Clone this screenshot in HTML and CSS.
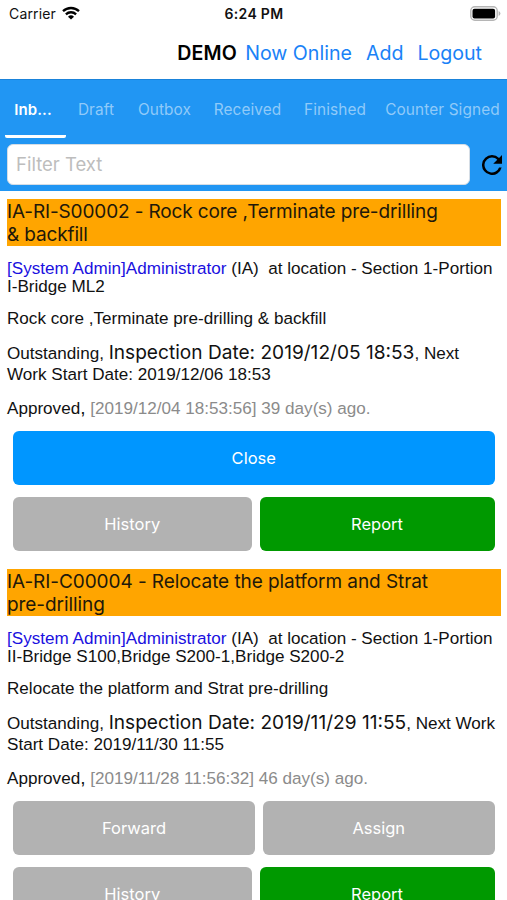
FILE: index.html
```html
<!DOCTYPE html>
<html lang="en">
<head>
    <meta charset="UTF-8">
    <meta name="viewport" content="width=device-width, initial-scale=1.0">
    <title>Inbox</title>
    <link rel="stylesheet" href="styles.css">
</head>
<body>

<div class="status-bar">
    <div class="carrier">
        <span>Carrier</span>
        <svg width="18" height="14" viewBox="0 0 18 14" fill="none" stroke="#000" stroke-width="2.3">
            <path d="M1 5.2a11.6 11.6 0 0 1 16 0"/>
            <path d="M3.9 8.3a7.4 7.4 0 0 1 10.2 0"/>
            <path d="M9 13.6L6 10.7a4.3 4.3 0 0 1 6 0z" fill="#000" stroke="none"/>
        </svg>
    </div>
    <div class="clock">6:24 PM</div>
    <svg class="battery" width="31" height="15" viewBox="0 0 31 15">
        <rect x="0.8" y="0.8" width="26.4" height="13.4" rx="4" fill="#fff" stroke="#b5b5b5" stroke-width="1.4"/>
        <rect x="2.5" y="2.7" width="22.6" height="9.8" rx="2" fill="#000"/>
        <path d="M28.6 5v5q1.8-.8 1.8-2.5T28.6 5z" fill="#b5b5b5"/>
    </svg>
</div>

<div class="nav-bar">
    <span class="brand">DEMO</span>
    <a class="nav-link online">Now Online</a>
    <a class="nav-link add">Add</a>
    <a class="nav-link logout">Logout</a>
</div>

<div class="header">
    <div class="tabs">
        <div class="tab active">Inb...</div>
        <div class="tab">Draft</div>
        <div class="tab">Outbox</div>
        <div class="tab">Received</div>
        <div class="tab">Finished</div>
        <div class="tab">Counter Signed</div>
    </div>
    <div class="filter">
        <input type="text" id="filterInput" placeholder="Filter Text">
        <svg width="20" height="20" viewBox="4 4 16 16">
            <path d="M17.65 6.35A7.95 7.95 0 0 0 12 4a8 8 0 1 0 7.73 10h-2.08A6 6 0 1 1 12 6c1.66 0 3.14.69 4.22 1.78L13 11h7V4l-2.35 2.35z"/>
        </svg>
    </div>
</div>

<div class="list">
    <div class="card">
        <div class="title tight">IA-RI-S00002 - Rock core ,Terminate pre-drilling<br>&amp; backfill</div>
        <p class="location"><span class="user">[System Admin]Administrator</span> (IA)&nbsp; at location - Section 1-Portion<br>I-Bridge ML2</p>
        <p class="desc">Rock core ,Terminate pre-drilling &amp; backfill</p>
        <p class="dates">Outstanding, <span class="inspection">Inspection Date: 2019/12/05 18:53</span>, Next<br>Work Start Date: 2019/12/06 18:53</p>
        <p class="approved">Approved<span class="comma">,</span> <span class="ago">[2019/12/04 18:53:56] 39 day(s) ago.</span></p>
        <div class="buttons">
            <button class="btn close">Close</button>
        </div>
        <div class="buttons history-row">
            <button class="btn">History</button>
            <button class="btn report">Report</button>
        </div>
    </div>

    <div class="card">
        <div class="title">IA-RI-C00004 - Relocate the platform and Strat<br>pre-drilling</div>
        <p class="location"><span class="user">[System Admin]Administrator</span> (IA)&nbsp; at location - Section 1-Portion<br>II-Bridge S100,Bridge S200-1,Bridge S200-2</p>
        <p class="desc">Relocate the platform and Strat pre-drilling</p>
        <p class="dates">Outstanding, <span class="inspection">Inspection Date: 2019/11/29 11:55</span>, Next Work<br>Start Date: 2019/11/30 11:55</p>
        <p class="approved">Approved<span class="comma">,</span> <span class="ago">[2019/11/28 11:56:32] 46 day(s) ago.</span></p>
        <div class="buttons forward-row">
            <button class="btn">Forward</button>
            <button class="btn">Assign</button>
        </div>
        <div class="buttons history-row">
            <button class="btn">History</button>
            <button class="btn report">Report</button>
        </div>
    </div>
</div>

</body>
</html>
```
FILE: styles.css
```css
* {
    box-sizing: border-box;
}

body {
    margin: 0;
    height: 900px;
    overflow: hidden;
    background-color: #fff;
    color: #111;
    font-family: Inter, sans-serif;
    white-space: nowrap;
}

.status-bar {
    display: grid;
    grid-template-columns: 1fr auto 1fr;
    align-items: center;
    height: 27px;
    padding: 0 6px 0 9px;
    font-size: 14px;
}

.carrier {
    display: flex;
    align-items: center;
    gap: 6px;
    letter-spacing: 0.15px;
}

.carrier svg {
    margin-top: -2px;
}

.clock {
    font-weight: 600;
    letter-spacing: 0.3px;
    margin-right: 2px;
}

.battery {
    justify-self: end;
}

.nav-bar {
    display: flex;
    justify-content: flex-end;
    align-items: center;
    height: 52px;
    padding-right: 25px;
    font-size: 19.6px;
}

.brand {
    font-weight: 600;
    color: #000;
    letter-spacing: 0.2px;
    margin-right: 8px;
}

.nav-link {
    color: #1a82f7;
}

.online,
.add {
    margin-right: 14px;
}

.header {
    height: 112px;
    background-color: #2196f3;
    border-top: 1px solid #1a83da;
}

.tabs {
    display: grid;
    grid-template-columns: 61px 60px 77px 89px 86px 129px;
    height: 58px;
    padding-left: 5px;
}

.tab {
    display: flex;
    align-items: center;
    justify-content: center;
    color: #90caf9;
    font-size: 15.4px;
    letter-spacing: 0.1px;
}

.tab.active {
    color: #fff;
    font-weight: 600;
    font-size: 15px;
    border-bottom: 3px solid #fff;
    border-radius: 0 0 2px 2px;
    padding-top: 3px;
    padding-right: 5px;
}

.filter {
    display: flex;
    align-items: center;
    gap: 12px;
    padding: 6px 5px 0 7px;
}

#filterInput {
    width: 463px;
    height: 41px;
    padding: 0 8px 2px;
    border: 1px solid #d5dde5;
    border-radius: 6px;
    background-color: #fff;
    font-family: Inter, sans-serif;
    font-size: 18.5px;
    outline: none;
}

#filterInput::placeholder {
    color: #bdbdbd;
}

.list {
    padding: 7.5px 6.5px 0 7px;
}

.card {
    height: 370px;
    font-family: "Liberation Sans", Arial, sans-serif;
    font-size: 17.1px;
}

.title {
    height: 47px;
    background-color: #ffa500;
    color: #21180a;
    font-family: Inter, sans-serif;
    font-size: 19px;
    line-height: 23px;
    letter-spacing: -0.07px;
    padding-top: 1px;
}

.title.tight {
    letter-spacing: -0.14px;
}

.card p {
    margin: 0;
}

.card .location {
    margin-top: 14px;
    line-height: 18.7px;
}

.user {
    color: #1a10e0;
}

.card .desc {
    margin-top: 11.8px;
    line-height: 19px;
}

.card .dates {
    margin-top: 14.4px;
    line-height: 20.5px;
}

.inspection {
    font-family: Inter, sans-serif;
    font-size: 19.1px;
}

.card .approved {
    margin-top: 12.4px;
    line-height: 22px;
}

.comma {
    font-size: 19px;
}

.ago {
    color: #8b8b8b;
}

.buttons {
    display: grid;
    grid-template-columns: 1fr;
    gap: 8px;
    padding: 0 6px;
    margin-top: 12px;
}

.approved + .buttons {
    margin-top: 10.6px;
}

.forward-row {
    grid-template-columns: 242px 1fr;
}

.history-row {
    grid-template-columns: 238.5px 1fr;
}

.btn {
    height: 54px;
    border: none;
    border-radius: 6px;
    background-color: #b2b2b2;
    color: #fff;
    font-family: Inter, sans-serif;
    font-size: 16.5px;
    cursor: pointer;
}

.btn.close {
    background-color: #0096ff;
}

.btn.report {
    background-color: #009900;
}
```
